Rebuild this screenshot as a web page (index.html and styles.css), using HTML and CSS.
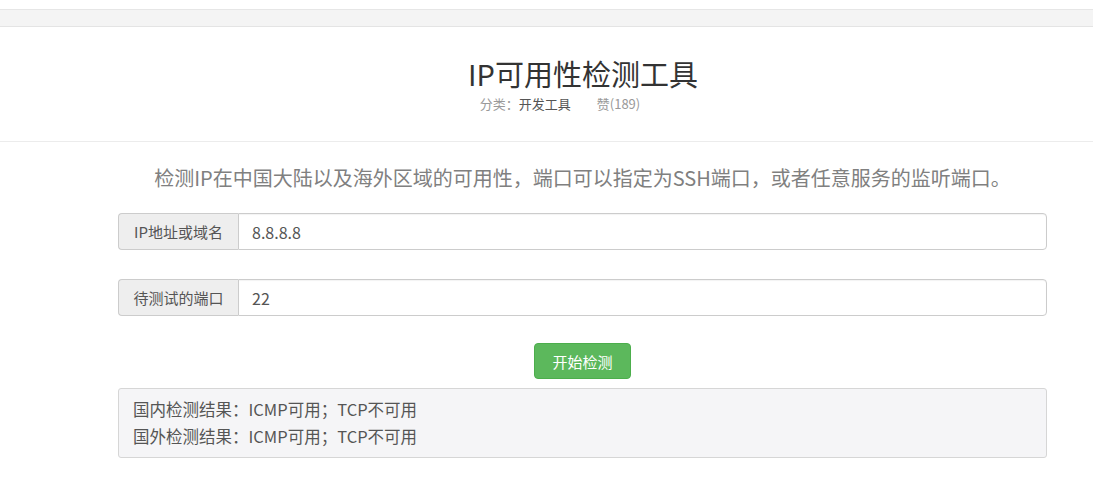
FILE: index.html
```html
<!DOCTYPE html>
<html lang="zh-CN">
<head>
<meta charset="utf-8">
<title>IP可用性检测工具</title>
<link rel="stylesheet" href="styles.css">
</head>
<body>
<div class="topbar"></div>
<header class="head">
  <h1 class="title">IP可用性检测工具</h1>
  <div class="meta"><span class="muted">分类：</span><span class="cat">开发工具</span><span class="muted likes">赞(189)</span></div>
</header>
<main class="main">
  <p class="desc">检测IP在中国大陆以及海外区域的可用性，端口可以指定为SSH端口，或者任意服务的监听端口。</p>
  <div class="group">
    <span class="addon">IP地址或域名</span>
    <input class="field" type="text" value="8.8.8.8">
  </div>
  <div class="group">
    <span class="addon">待测试的端口</span>
    <input class="field" type="text" value="22">
  </div>
  <div class="actions"><button class="btn" type="button">开始检测</button></div>
  <div class="result">
    <div>国内检测结果：ICMP可用；TCP不可用</div>
    <div>国外检测结果：ICMP可用；TCP不可用</div>
  </div>
</main>
</body>
</html>
```
FILE: styles.css
```css
* { box-sizing: border-box; }
html, body { margin: 0; padding: 0; background: #fff; }
body {
  font-family: "Noto Sans CJK SC", "Noto Sans", sans-serif;
  color: #333;
}
.topbar {
  margin-top: 9px;
  height: 18px;
  background: #f4f4f4;
  border-top: 1px solid #e6e6e6;
  border-bottom: 1px solid #e4e4e4;
}
.head {
  display: flex;
  flex-direction: column;
  align-items: center;
  padding-left: 73px;
  height: 115px;
  border-bottom: 1px solid #ececec;
}
.title {
  margin: 28px 0 0;
  font-size: 29px;
  font-weight: 400;
  line-height: 36px;
  color: #333;
}
.meta {
  font-size: 13px;
  line-height: 16px;
  margin-top: 5px;
  margin-right: 46px;
}
.muted { color: #999; }
.cat { color: #555; }
.likes { margin-left: 26px; }
.main {
  width: 929px;
  margin-left: 118px;
  display: flex;
  flex-direction: column;
}
.desc {
  margin: 22px 0 0;
  text-align: center;
  font-size: 20px;
  line-height: 28px;
  color: #808080;
}
.group {
  display: flex;
  height: 37px;
  margin-top: 21px;
}
.group + .group { margin-top: 29px; }
.addon {
  display: flex;
  align-items: center;
  justify-content: center;
  width: 120px;
  background: #eee;
  border: 1px solid #ccc;
  border-right: 0;
  border-radius: 4px 0 0 4px;
  font-size: 15px;
  color: #555;
}
.field {
  flex: 1;
  min-width: 0;
  border: 1px solid #ccc;
  border-radius: 0 4px 4px 0;
  padding: 0 13px;
  font-family: "Noto Sans CJK SC", "Noto Sans", sans-serif;
  font-size: 16px;
  color: #555;
  background: #fff;
  outline: none;
  box-shadow: inset 0 1px 1px rgba(0,0,0,.05);
}
.actions {
  display: flex;
  justify-content: center;
  margin-top: 27px;
}
.btn {
  width: 97px;
  height: 36px;
  background: #5cb85c;
  border: 1px solid #4cae4c;
  border-radius: 4px;
  color: #fff;
  font-family: "Noto Sans CJK SC", "Noto Sans", sans-serif;
  font-size: 15px;
  padding: 0;
}
.result {
  margin-top: 9px;
  padding: 7px 14px;
  background: #f5f5f7;
  border: 1px solid #d6d6d6;
  border-radius: 3px;
  font-size: 16.5px;
  line-height: 27px;
  color: #555;
}
```
